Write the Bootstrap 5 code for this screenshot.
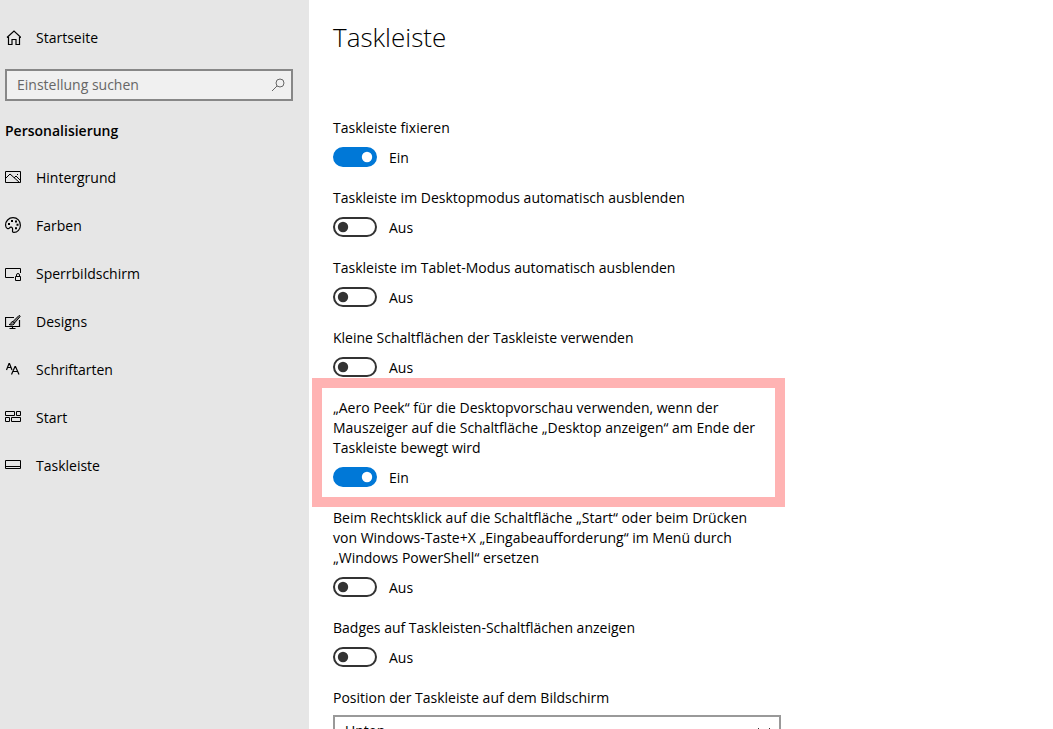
<!DOCTYPE html>
<html lang="de">
<head>
<meta charset="utf-8">
<meta name="viewport" content="width=device-width, initial-scale=1">
<title>Einstellungen – Taskleiste</title>
<link href="https://cdn.jsdelivr.net/npm/bootstrap@5.3.0/dist/css/bootstrap.min.css" rel="stylesheet">
<style>
  body { font-family: "Open Sans", "Noto Sans", sans-serif; font-size: 14px; line-height: 20px; color: #000; background: #fff; }
  .sidebar { width: 309px; background: #e6e6e6; padding: 14px 16px 0 5px; }
  .sidebar .nav-link { height: 48px; padding: 0; gap: 15px; color: #000; }
  .sidebar svg { width: 16px; height: 18px; fill: none; stroke: #000; stroke-width: 1; flex: none; }
  .search { height: 32px; margin: 7px 0 20px; border: 2px solid #878787; background: #f0f0f0; padding: 0 5px 0 10px; }
  .search .form-control { font-size: 14px; line-height: 20px; color: #000; box-shadow: none; }
  .search .form-control::placeholder { color: #666; opacity: 1; }
  .search svg { stroke: #666; }
  .section-title { font-size: 14px; line-height: 20px; font-weight: 600; margin: 0 0 13px; }
  .content-pane { padding: 19px 24px 0; }
  .page-title { font-size: 26px; line-height: 36px; font-weight: 300; margin: 0 0 63px; }
  .settings { max-width: 448px; }
  .setting { margin-bottom: 16px; }
  .setting label { display: block; max-width: 436px; margin-bottom: 4px; }
  .setting .form-switch { min-height: 30px; gap: 12px; }
  .switch-state { padding-top: 2px; }
  .form-switch .form-check-input { float: none; width: 44px; height: 20px; margin: 0; border: 2px solid #333; background-color: #fff; background-size: 16px 16px; background-position: 0 center; background-image: url("data:image/svg+xml,%3Csvg xmlns='http://www.w3.org/2000/svg' viewBox='0 0 16 16'%3E%3Ccircle cx='8' cy='8' r='5.2' fill='%23333'/%3E%3C/svg%3E"); }
  .form-switch .form-check-input:checked { border-color: #0078d7; background-color: #0078d7; background-position: right center; background-image: url("data:image/svg+xml,%3Csvg xmlns='http://www.w3.org/2000/svg' viewBox='0 0 16 16'%3E%3Ccircle cx='8' cy='8' r='5.2' fill='%23fff'/%3E%3C/svg%3E"); }
  .highlighted { position: relative; }
  .highlighted::before { content: ""; position: absolute; inset: -20px -4px -15px -21px; border: 10px solid #ffb3b3; pointer-events: none; }
  .position-select { height: 32px; margin-top: 7px; padding: 0 30px 0 10px; border: 2px solid #999; font-size: 14px; line-height: 20px; color: #000; background-size: 14px 14px; background-position: right 8px center; background-image: url("data:image/svg+xml,%3Csvg xmlns='http://www.w3.org/2000/svg' viewBox='0 0 14 14'%3E%3Cpath d='M1 4l6 6 6-6' fill='none' stroke='%23333'/%3E%3C/svg%3E"); }
</style>
</head>
<body>
<div class="d-flex vh-100 overflow-hidden">
  <aside class="sidebar flex-shrink-0">
    <nav class="nav flex-column">
      <a class="nav-link d-flex align-items-center" href="#">
        <svg viewBox="0 0 16 18"><path stroke-width="1.200" d="M2 8.500L9 2l7 6.500M3.500 8v7.500h3.500v-5h4v5h3.500V8"/></svg>
        <span>Startseite</span></a>
    </nav>
    <div class="search d-flex align-items-center">
      <input class="form-control border-0 bg-transparent rounded-0 p-0" type="text" placeholder="Einstellung suchen" aria-label="Einstellung suchen">
      <svg viewBox="0 0 16 18"><circle cx="10" cy="7" r="4"/><path d="M7 10l-5 5"/></svg>
    </div>
    <h2 class="section-title">Personalisierung</h2>
    <nav class="nav flex-column">
      <a class="nav-link d-flex align-items-center" href="#">
        <svg viewBox="0 0 16 18"><path d="M.5 2.500h15v11H.5zM1 9l4-4 9.500 8.500M9 9l2-2 4.500 4.500"/><path d="M12 5.500h1"/></svg>
        <span>Hintergrund</span></a>
      <a class="nav-link d-flex align-items-center" href="#">
        <svg viewBox="0 0 16 18"><path stroke-width="1.200" d="M.7 9C0 4 4 .7 8 .7c4.500 0 7.400 3.500 7.400 7.500s-3 7.200-6.400 7.200c-2.500 0-1-2.500-1.500-4S5.500 9.500 4.500 11 1 11.500.7 9z"/><path stroke-width="2" d="M3 7h2M6 4h2M10 4.500h2M11.500 7.700h2M10 11.200h2"/></svg>
        <span>Farben</span></a>
      <a class="nav-link d-flex align-items-center" href="#">
        <svg viewBox="0 0 16 18"><path d="M9 12.500H.5v-9h15V8M10.500 11.500h5v4h-5zM11.500 11.500V10a1.500 1.500 0 0 1 3 0v1.500"/></svg>
        <span>Sperrbildschirm</span></a>
      <a class="nav-link d-flex align-items-center" href="#">
        <svg viewBox="0 0 16 18"><path stroke-width="1.200" d="M9 4.500H.5v9h14V7M7.500 13.500v2M4.500 15.500h6"/><path fill="#888" d="M14 2.500c1 0 1.400.6 1 1.200L9.500 10 8 8.500zM8 8.500c-1.500 0-2 1-2 2-.5.700-1 1-2 1 2.500 1 5.500.5 5.500-1.500z"/></svg>
        <span>Designs</span></a>
      <a class="nav-link d-flex align-items-center" href="#">
        <svg viewBox="0 0 16 18"><path stroke-width="1.200" d="M1.500 9L4 2.500h.5L7 9M2.500 6.500H6M6.500 13.500l3.500-8h.5l3.500 8M8 10.500h4.500"/></svg>
        <span>Schriftarten</span></a>
      <a class="nav-link d-flex align-items-center" href="#">
        <svg viewBox="0 0 16 18"><path d="M.5 2.500h9v4h-9zM11.500 2.500h4v4h-4zM.5 8.500h4v4h-4zM6.500 8.500h9v4h-9z"/></svg>
        <span>Start</span></a>
      <a class="nav-link d-flex align-items-center" href="#">
        <svg viewBox="0 0 16 18"><path d="M.5 3.500h15v8H.5zM.5 9.500h15"/></svg>
        <span>Taskleiste</span></a>
    </nav>
  </aside>

  <main class="content-pane flex-grow-1">
    <h1 class="page-title">Taskleiste</h1>
    <div class="settings">
      <div class="setting">
        <label for="lock">Taskleiste fixieren</label>
        <div class="form-switch d-flex align-items-center p-0"><input class="form-check-input" type="checkbox" role="switch" id="lock" checked><span class="switch-state">Ein</span></div>
      </div>
      <div class="setting">
        <label for="hideDesktop">Taskleiste im Desktopmodus automatisch ausblenden</label>
        <div class="form-switch d-flex align-items-center p-0"><input class="form-check-input" type="checkbox" role="switch" id="hideDesktop"><span class="switch-state">Aus</span></div>
      </div>
      <div class="setting">
        <label for="hideTablet">Taskleiste im Tablet-Modus automatisch ausblenden</label>
        <div class="form-switch d-flex align-items-center p-0"><input class="form-check-input" type="checkbox" role="switch" id="hideTablet"><span class="switch-state">Aus</span></div>
      </div>
      <div class="setting">
        <label for="smallButtons">Kleine Schaltflächen der Taskleiste verwenden</label>
        <div class="form-switch d-flex align-items-center p-0"><input class="form-check-input" type="checkbox" role="switch" id="smallButtons"><span class="switch-state">Aus</span></div>
      </div>
      <div class="setting highlighted">
        <label for="peek">„Aero Peek“ für die Desktopvorschau verwenden, wenn der Mauszeiger auf die Schaltfläche „Desktop anzeigen“ am Ende der Taskleiste bewegt wird</label>
        <div class="form-switch d-flex align-items-center p-0"><input class="form-check-input" type="checkbox" role="switch" id="peek" checked><span class="switch-state">Ein</span></div>
      </div>
      <div class="setting">
        <label for="powershell">Beim Rechtsklick auf die Schaltfläche „Start“ oder beim Drücken von Windows-Taste+X „Eingabeaufforderung“ im Menü durch „Windows PowerShell“ ersetzen</label>
        <div class="form-switch d-flex align-items-center p-0"><input class="form-check-input" type="checkbox" role="switch" id="powershell"><span class="switch-state">Aus</span></div>
      </div>
      <div class="setting">
        <label for="badges">Badges auf Taskleisten-Schaltflächen anzeigen</label>
        <div class="form-switch d-flex align-items-center p-0"><input class="form-check-input" type="checkbox" role="switch" id="badges"><span class="switch-state">Aus</span></div>
      </div>
      <div class="setting">
        <label for="position">Position der Taskleiste auf dem Bildschirm</label>
        <select class="form-select rounded-0 position-select" id="position"><option>Unten</option><option>Oben</option><option>Links</option><option>Rechts</option></select>
      </div>
    </div>
  </main>
</div>
<script src="https://cdn.jsdelivr.net/npm/bootstrap@5.3.0/dist/js/bootstrap.bundle.min.js"></script>
</body>
</html>
